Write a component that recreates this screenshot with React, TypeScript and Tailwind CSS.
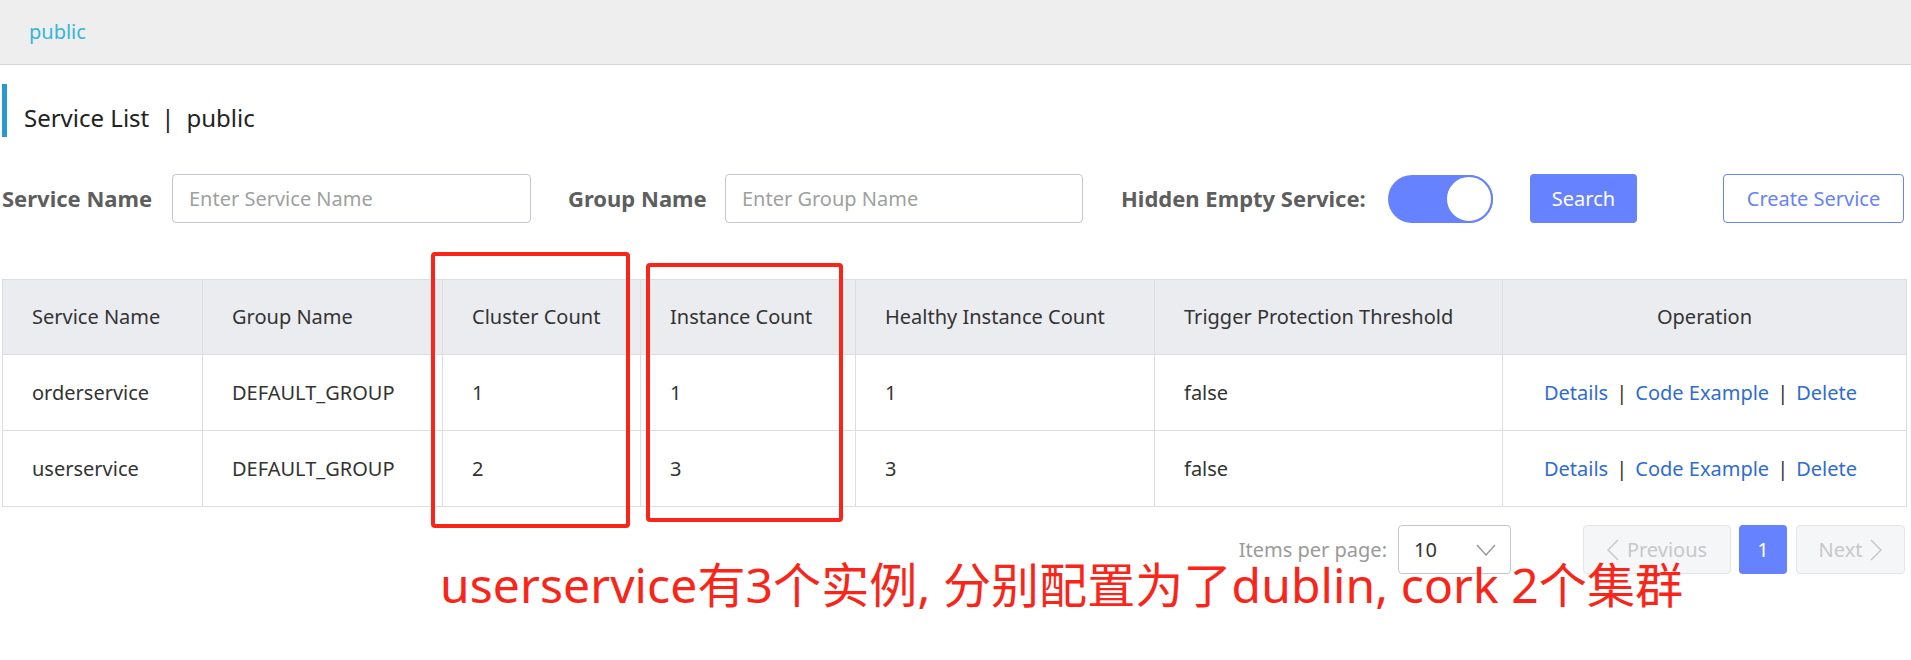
import React from "react";

const cols = [200, 240, 198, 215, 299, 348, 404];
const headers = [
  "Service Name",
  "Group Name",
  "Cluster Count",
  "Instance Count",
  "Healthy Instance Count",
  "Trigger Protection Threshold",
  "Operation",
];
const rows = [
  ["orderservice", "DEFAULT_GROUP", "1", "1", "1", "false"],
  ["userservice", "DEFAULT_GROUP", "2", "3", "3", "false"],
];

function Ops() {
  return (
    <div className="flex items-center justify-center gap-[8px] text-[20px] pr-[8px]">
      <span className="text-[#2f6bd4]">Details</span>
      <span className="text-[#333]">|</span>
      <span className="text-[#2f6bd4]">Code Example</span>
      <span className="text-[#333]">|</span>
      <span className="text-[#2f6bd4]">Delete</span>
    </div>
  );
}

export default function App() {
  return (
    <div className="relative w-[1911px] h-[660px] overflow-hidden bg-white font-['Noto_Sans','Noto_Sans_CJK_SC',sans-serif] text-[#333]">
      {/* top bar */}
      <div className="h-[65px] bg-[#eeeeee] border-b border-[#d6d6d6] flex items-center pl-[29px]">
        <span className="text-[20px] text-[#35b6d9] leading-none">public</span>
      </div>

      {/* title */}
      <div className="mt-[19px] ml-[2px] h-[53px] border-l-[5px] border-[#2a98d0] pl-[17px] pt-[18px]">
        <div className="text-[24px] leading-[32px] text-[#222] flex items-center">
          <span>Service List</span>
          <span className="mx-[12px]">|</span>
          <span>public</span>
        </div>
      </div>

      {/* filters */}
      <div className="mt-[37px] h-[49px] flex items-center pl-[2px]">
        <div className="w-[148px] text-[22px] font-bold text-[#5e5e5e] whitespace-nowrap">Service Name</div>
        <div className="ml-[22px] w-[359px] h-[49px] border border-[#c4c6cf] rounded-[4px] flex items-center pl-[16px] text-[20px] text-[#a0a0a0]">
          Enter Service Name
        </div>
        <div className="ml-[37px] w-[135px] text-[22px] font-bold text-[#5e5e5e] whitespace-nowrap">Group Name</div>
        <div className="ml-[22px] w-[358px] h-[49px] border border-[#c4c6cf] rounded-[4px] flex items-center pl-[16px] text-[20px] text-[#a0a0a0]">
          Enter Group Name
        </div>
        <div className="ml-[38px] w-[245px] text-[22px] font-bold text-[#5e5e5e] whitespace-nowrap">Hidden Empty Service:</div>
        <div className="ml-[22px] w-[105px] h-[48px] rounded-full bg-[#6682fe] relative">
          <div className="absolute right-0 top-0 w-[48px] h-[48px] rounded-full bg-white border-[2px] border-[#6682fe]" />
        </div>
        <div className="ml-[37px] w-[107px] h-[49px] rounded-[4px] bg-[#6682fe] text-white text-[20px] flex items-center justify-center">
          Search
        </div>
        <div className="ml-[86px] w-[181px] h-[49px] rounded-[4px] border border-[#6682fe] text-[#6682fe] text-[20px] flex items-center justify-center">
          Create Service
        </div>
      </div>

      {/* table */}
      <div className="mt-[56px] ml-[2px] w-[1904px]">
        <table className="table-fixed border-collapse w-[1904px] text-[20px]">
          <colgroup>
            {cols.map((w, i) => (
              <col key={i} style={{ width: w }} />
            ))}
          </colgroup>
          <thead>
            <tr className="h-[75px] bg-[#ebecf0]">
              {headers.map((h, i) => (
                <th
                  key={i}
                  className={`border border-[#dcdee3] font-normal text-[#333] whitespace-nowrap ${
                    i === 6 ? "text-center" : "text-left pl-[29px]"
                  }`}
                >
                  {h}
                </th>
              ))}
            </tr>
          </thead>
          <tbody>
            {rows.map((r, ri) => (
              <tr key={ri} className="h-[76px] bg-white">
                {r.map((c, ci) => (
                  <td key={ci} className="border border-[#dcdee3] pl-[29px] text-[#333] whitespace-nowrap">
                    {c}
                  </td>
                ))}
                <td className="border border-[#dcdee3]">
                  <Ops />
                </td>
              </tr>
            ))}
          </tbody>
        </table>
      </div>

      {/* pagination */}
      <div className="mt-[18px] h-[49px] flex items-center justify-end pr-[6px]">
        <span className="text-[20px] text-[#9a9a9a] mr-[11px]">Items per page:</span>
        <div className="w-[113px] h-[49px] border border-[#c4c6cf] rounded-[4px] flex items-center justify-between pl-[15px] pr-[14px]">
          <span className="text-[20px] text-[#333]">10</span>
          <svg width="20" height="12" viewBox="0 0 20 12" fill="none">
            <path d="M1 1 L10 11 L19 1" stroke="#9a9a9a" strokeWidth="1.5" />
          </svg>
        </div>
        <div className="ml-[72px] w-[148px] h-[49px] rounded-[4px] border border-[#e3e5ea] bg-[#f5f6f8] flex items-center justify-center gap-[8px] text-[20px] text-[#c8c8c8]">
          <svg width="12" height="22" viewBox="0 0 12 22" fill="none">
            <path d="M11 1 L1 11 L11 21" stroke="#c8c8c8" strokeWidth="1.5" />
          </svg>
          <span>Previous</span>
        </div>
        <div className="ml-[8px] w-[48px] h-[49px] rounded-[4px] bg-[#6682fe] text-white text-[20px] flex items-center justify-center">
          1
        </div>
        <div className="ml-[9px] w-[109px] h-[49px] rounded-[4px] border border-[#e3e5ea] bg-[#f5f6f8] flex items-center justify-center gap-[8px] text-[20px] text-[#c8c8c8]">
          <span>Next</span>
          <svg width="12" height="22" viewBox="0 0 12 22" fill="none">
            <path d="M1 1 L11 11 L1 21" stroke="#c8c8c8" strokeWidth="1.5" />
          </svg>
        </div>
      </div>

      {/* annotations */}
      <div className="absolute left-[431px] top-[252px] w-[199px] h-[276px] border-[4px] border-[#fb2418] rounded-[4px]" />
      <div className="absolute left-[646px] top-[263px] w-[197px] h-[259px] border-[4px] border-[#fb2418] rounded-[4px]" />
      <div className="absolute left-[440px] top-[557px] text-[48px] tracking-[0.1px] leading-[56px] text-[#fb2418] whitespace-nowrap">
        userservice有3个实例, 分别配置为了dublin, cork 2个集群
      </div>
    </div>
  );
}
